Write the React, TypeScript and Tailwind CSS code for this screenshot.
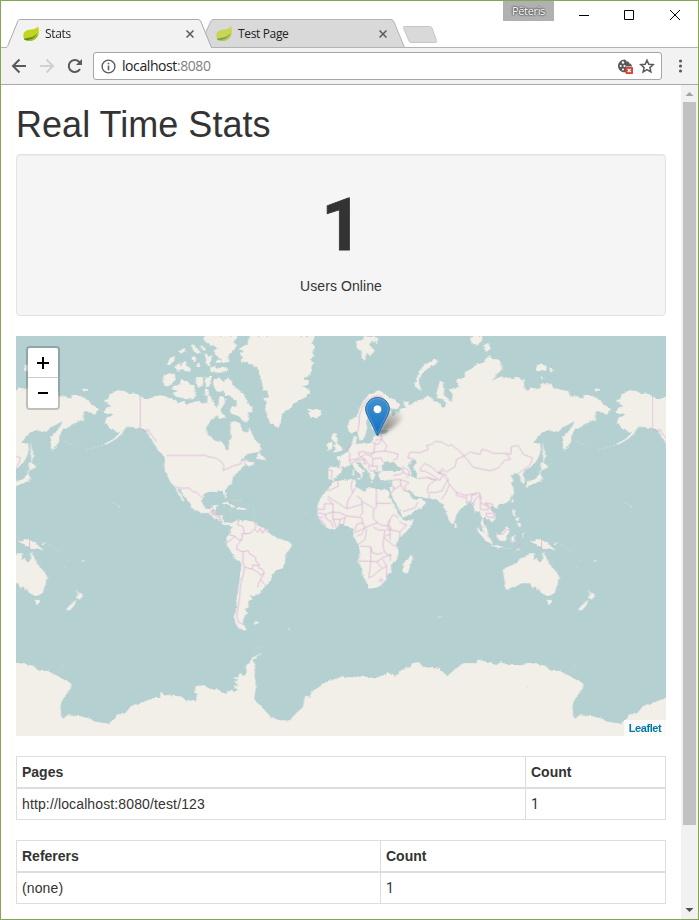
import type { ReactNode } from "react";

const LAND = "#f2efe9";
const WATER = "#b5d0d0";

/* Land outlines, grouped by the map region whose origin they are measured from (a third of a pixel per unit). */
const AMERICA =
  "M-59 180L-77 172 -97 170 -110 166 -125 160 -137 168 -151 176 -157 190 -168 193 -157 203 -149 210 -162 219 -172 226 -160 234 -146 232 -144 240 -160 244 -166 262 -156 268 -152 277 -142 278 -130 290 -120 288 -127 297 -142 310 -162 321 -182 331 -157 324 -132 309 -114 293 -104 277 -94 268 -98 277 -87 272 -76 275 -59 275 -46 283 -37 292 -30 303 -22 318 -14 330 -7 342 4 352 14 362 14 380 13 395 20 415 27 430 35 443 45 452 52 470 60 482 70 497 74 497 66 480 56 465 52 455 60 460 70 478 82 490 92 505 94 515 110 524 130 532 142 530 150 538 160 545 172 550 180 556 185 562 195 568 205 566 212 571 214 563 200 560 190 557 187 545 187 536 172 537 162 535 165 525 172 513 172 507 160 508 150 520 138 518 128 505 126 485 133 473 145 468 160 467 172 469 174 464 186 464 192 470 196 485 201 484 196 463 203 452 215 440 220 425 225 414 240 404 245 396 258 386 270 378 258 386 264 392 285 378 270 378 255 370 240 374 250 366 262 354 285 350 296 348 303 338 300 325 285 313 275 290 268 277 260 290 248 285 240 262 225 256 210 258 212 275 210 285 216 300 208 315 205 343 198 343 192 325 185 318 165 314 150 302 140 290 138 275 148 260 158 248 170 240 180 228 186 210 196 200 185 180 178 182 174 212 165 210 158 195 152 180 142 181 142 200 130 203 110 195 95 200 80 207 70 195 55 200 45 190 30 188 15 180 0 178 -12 180 -27 186 -42 190Z";
const ARCTIC =
  "M40 150L60 146 62 132 75 132 85 138 92 148 100 145 105 160 108 180 100 190 80 190 60 185 45 180 38 170 55 165 36 160ZM12 115L30 112 45 118 48 130 38 140 25 152 14 150 8 135ZM108 125L125 122 130 135 128 150 115 154 108 143ZM135 122L155 119 153 135 146 155 135 148ZM134 157L146 161 147 180 135 178ZM162 130L175 125 190 135 205 126 215 135 218 147 240 165 255 178 262 200 278 215 272 230 262 228 268 245 262 260 245 252 235 240 215 233 210 223 216 210 228 213 230 196 220 188 210 178 195 180 190 162 180 170 165 160 160 145ZM150 95L165 90 172 96 185 92 202 95 200 108 175 110 152 108ZM165 80L175 70 188 76 170 60 160 45 174 36 140 20 130 10 135 0 234 0 220 18 231 28 215 50 205 60 208 78 185 80ZM43 92L60 80 61 93 75 72 80 92 92 92 90 107 75 105 64 98 55 106ZM21 85L30 65 45 60 42 76 25 88ZM94 22L110 35 123 50 112 54 98 41ZM56 44L74 36 76 45 62 54ZM118 30L126 28 138 40 132 45ZM132 50L146 62 157 55 155 68 148 92 136 80 139 71ZM94 65L104 60 109 68 101 80ZM111 83L122 80 119 94 109 92ZM173 226L183 228 200 247 190 245 178 250 173 240ZM185 180L198 187 193 200 188 215 182 200Z";
const GREENLAND =
  "M270 0L262 24 235 40 252 44 240 55 250 66 240 72 242 80 260 78 275 85 290 95 300 115 306 140 310 165 322 162 325 185 312 186 320 200 314 215 322 240 330 262 345 270 355 277 361 262 365 240 370 228 385 222 402 203 420 192 440 182 450 172 448 160 425 150 436 150 450 135 430 128 452 115 455 90 462 80 450 70 462 60 456 48 464 35 457 20 465 0ZM440 220L450 226 443 231 455 245 470 246 484 236 482 224 470 218 458 222 448 218ZM292 358L300 345 302 358 315 362 316 374 305 370 288 369ZM262 382L275 385 284 378 281 387 268 391ZM184 502L200 498 215 505 228 514 220 515 205 506 188 503ZM228 516L245 514 262 520 248 522 240 520 232 521ZM208 520L217 521 212 523ZM-235 160L-216 159 -217 164 -228 165Z";
const SOUTH_AMERICA =
  "M642 73L652 66 662 57 668 66 668 58 680 62 700 65 713 63 722 74 732 80 750 85 760 100 775 110 800 119 819 125 827 133 824 145 812 158 808 168 807 188 800 205 780 211 768 223 764 240 750 257 740 268 735 273 730 283 712 289 700 289 710 298 697 303 698 322 688 327 693 340 685 350 681 362 680 370 692 389 684 392 668 385 658 370 653 350 660 330 663 290 671 240 676 190 670 182 655 175 645 155 635 138 629 130 632 120 631 110 643 100 646 85ZM715 367L728 365 725 371 718 371ZM813 381L823 388 818 389ZM628 70L635 67 645 71 643 77 634 72Z";
const ANTARCTICA =
  "M-2 488L25 491 50 497 70 512 95 513 120 525 140 537 160 545 167 555 160 575 148 585 140 600 134 612 134 640 142 657 152 646 190 648 215 654 235 664 278 672 298 655 302 643 325 643 345 618 375 608 410 595 432 592 434 577 445 584 475 587 500 590 513 607 515 600 540 604 542 585 536 575 540 558 565 556 580 566 605 568 628 583 640 570 660 573 667 569 652 560 666 555 655 545 668 540 650 533 665 530 672 520 685 530 692 515 690 495 700 490 705 478 715 470 738 457 730 465 712 480 717 500 716 530 720 560 714 600 735 618 765 652 790 661 822 661 840 640 860 622 868 587 880 590 890 573 910 560 935 543 965 535 975 528 1002 533 1037 527 1077 535 1117 518 1137 528 1157 510 1182 500 1190 490 1207 486 1222 500 1272 507 1294 528 1317 508 1342 490 1382 490 1385 478 1402 483 1442 495 1454 486 1472 494 1517 496 1538 488V780H-2Z";
const EURASIA =
  "M222 172L235 182 262 195 270 208 262 220 245 218 235 213 243 225 246 238 250 241 258 232 255 225 266 234 270 218 290 215 280 205 282 195 295 197 300 208 318 195 340 188 352 180 360 182 375 195 388 200 395 215 405 213 408 200 395 188 383 187 380 170 385 150 390 135 398 137 400 155 405 160 400 178 412 185 425 200 428 175 416 160 434 157 447 152 440 142 442 125 450 130 465 122 464 108 485 98 500 85 520 80 527 68 540 57 548 70 566 70 575 85 578 100 565 110 545 135 570 122 590 125 610 130 625 123 642 135 642 153 652 165 665 155 685 160 695 142 715 142 735 155 755 162 775 165 780 182 800 180 820 188 822 176 845 178 865 190 885 207 903 220 890 237 875 228 859 225 855 235 858 252 835 260 810 275 795 278 785 300 783 318 762 345 757 320 760 300 780 280 790 265 793 255 778 265 755 275 750 287 710 283 695 290 670 320 690 322 693 345 680 375 660 395 648 400 638 415 645 430 643 440 633 440 630 420 623 415 615 411 600 420 610 430 602 440 610 455 612 470 605 485 590 500 565 508 555 515 545 508 540 518 552 530 557 545 545 560 538 550 528 545 520 540 518 555 528 575 535 595 530 602 518 582 513 560 515 545 508 525 495 530 490 510 480 495 485 492 472 505 455 515 440 535 434 555 425 568 415 550 405 520 400 505 390 500 380 490 350 487 335 484 315 480 302 465 293 460 300 475 308 488 320 492 328 485 335 490 348 500 335 515 315 525 295 538 278 545 272 530 262 510 250 490 243 472 240 460 246 450 247 432 240 430 230 435 212 431 205 420 206 408 190 406 195 418 188 435 180 425 178 412 165 395 155 385 148 378 138 380 150 395 168 408 157 407 158 420 152 428 151 415 132 398 128 385 115 390 98 392 94 408 82 420 70 432 55 430 55 410 55 395 75 393 88 396 90 380 78 364 95 358 108 350 115 345 125 325 128 318 130 300 140 303 138 320 160 323 180 322 190 310 190 300 202 296 230 292 235 285 215 283 195 285 185 278 182 255 194 240 190 225 175 238 168 260 172 275 165 300 158 312 148 314 143 290 138 285 125 293 115 285 113 270 118 255 140 240 150 215 160 195 175 178 195 170 205 162Z";
const EURASIA_ISLES =
  "M385 70L383 80 350 100 335 115 325 135 335 165 322 157 313 150 319 130 325 110 345 85 370 72ZM138 15L158 12 162 0 180 3 195 0 205 10 200 22 185 14 180 28 195 45 180 60 170 50 165 75 155 65 155 45 143 40ZM72 290L82 295 77 302 84 310 80 320 96 335 95 345 68 350 78 341 72 328 80 324 70 315 62 305ZM55 320L68 318 66 340 50 342 56 335 50 330ZM480 5L492 3 507 22 502 30 486 24ZM482 0L515 0 518 16 505 22ZM518 30L535 20 542 38 528 48ZM680 88L692 84 710 90 709 105 695 102 678 109ZM717 97L735 103 722 108ZM694 120L703 128 694 130ZM854 161L870 158 869 163 858 165ZM695 395L692 415 698 432 685 438 675 443 660 445 650 457 647 450 655 435 675 430 688 415 690 402ZM695 375L715 392 702 400 692 402ZM697 318L704 345 708 360 700 378 699 350ZM435 558L442 572 436 575 432 568ZM609 488L611 495 607 502 604 496ZM554 512L566 511 560 518ZM130 400L133 404 132 420 127 417ZM178 437L192 440 182 441ZM236 439L243 436 239 442ZM138 426L151 426 148 432Z";
const AFRICA =
  "M65 440L75 436 100 432 130 430 138 435 135 452 150 458 165 467 175 453 200 459 235 462 240 475 236 475 248 500 262 522 269 540 283 555 300 552 311 549 305 567 285 592 265 612 262 627 266 642 264 667 250 680 242 687 245 707 232 717 228 732 210 750 198 755 175 758 170 742 158 717 155 697 143 674 150 652 145 627 138 614 130 597 132 582 125 574 115 572 90 565 80 578 60 580 45 572 28 550 22 535 25 500 35 480 50 465 60 450Z";
const OCEANIA =
  "M214 163L218 175 205 215 195 221 188 212 189 190 205 177ZM488 210L500 202 530 190 540 175 555 172 565 160 585 160 583 175 600 187 607 180 610 155 618 170 626 190 645 210 658 230 655 250 642 280 630 287 605 283 595 265 590 270 588 260 578 266 570 250 545 250 520 262 498 268 493 263 495 250ZM620 299L636 300 632 313 626 314ZM741 266L752 278 765 285 755 300 744 293 750 282ZM745 298L740 315 725 332 714 328 730 312ZM565 120L580 125 590 116 620 125 635 140 647 153 628 145 610 148 600 140 588 135 574 126ZM470 100L480 103 495 88 503 78 510 90 502 105 497 123 480 122 470 112ZM409 83L425 92 445 110 457 125 455 133 435 120 420 102ZM453 134L480 138 508 145 520 147 490 144 458 140ZM513 110L530 105 520 113 528 125 518 121 516 131 512 124ZM517 28L524 28 525 44 530 52 518 45ZM530 70L542 68 542 82 532 78ZM524 57L538 50 534 65ZM640 133L655 125 646 136ZM546 100L551 98 550 115ZM568 113L578 110 574 114ZM526 150L542 144 534 151ZM704 196L716 206 712 204ZM760 183L770 179 764 187ZM295 349L304 350 299 353ZM424 66L432 72 443 88 442 98 432 88Z";

const AMERICA_BORDERS =
  "M-59 180V275L-46 285 -36 280 -27 295 -10 318M20 358H138L143 362 168 366 185 378 192 390 189 403 205 397 220 389 242 384 247 370 254 372V384M45 452L65 457 88 456 100 469 108 467 125 485M150 525L162 521 155 540M162 535L172 545 185 535M180 556V548";
const SOUTH_BORDERS =
  "M668 60L665 74 681 80 686 102 704 99 713 88M713 65L720 78 716 88 725 98 733 85 740 100 748 84 753 98M640 105L655 108 668 120 678 118V101L686 102M629 130L645 120 655 108M678 118L664 135 661 147 678 155 697 152 701 162 718 171 721 186 729 192 728 204M678 155L682 160 680 185 686 202 708 207 710 195 728 196M686 202L682 223 675 250 669 305 662 350 668 367 680 374M708 207L728 218 733 226 745 219 738 207 728 204M745 219L737 233 728 248 725 262M733 240L750 257M582 40L593 28 590 42 607 45 618 67";
const EURASIA_BORDERS =
  "M206 178L190 182 168 194 158 212 148 238 147 265 143 288M192 182L212 180 220 184M126 323L110 340 120 354 118 373 122 385 137 374 165 370 148 360 145 350 158 346 178 352 192 350 194 322 186 318M118 373L150 366 165 354 182 360 193 348 224 345 231 330 216 310 196 312M194 322L205 325 216 310 212 296M224 345L250 350 264 354 261 368 250 372M182 360L189 368 213 366 218 378M165 370L178 388 175 395 183 405 201 402 203 390 187 390 189 368M165 370L160 382 171 383M178 388L189 392M55 402L66 403 65 430M85 396L100 394M276 390L297 405 298 417 280 410 278 395M281 405L272 415 250 418M247 432L270 430 273 447 253 460 248 450M270 430L297 440 285 450 285 462 299 469M273 447L280 462 295 468M298 417L288 425M240 470L248 467 253 452M278 527L300 520 315 515 324 498M325 428L352 424 376 432 356 447 352 465 359 478 355 488M352 424L365 430 390 432 398 418 416 430 405 445 396 465 374 470 359 468M332 395L344 382 363 392 383 410 395 415M332 395V405L345 405 368 418 385 430M400 405L385 410 410 417M312 370L293 365 300 348 330 350 355 340 350 328 368 324 375 316 395 318 415 330 424 326 448 345 463 360 440 370 435 392 409 408 398 397 385 410M463 360L480 348 510 355 515 340 535 345 550 352 588 352 602 370 585 372 565 396 540 404 490 394 463 360M588 352L602 355 604 332 625 328 640 355 668 366 660 388 650 395 625 412M410 430L418 445 408 470 395 490M418 445L438 468 465 478 485 474 508 470 515 490M438 468L440 478 468 485M470 480V502L485 492 484 478 500 475M488 510L495 490 508 478 512 500 530 510 525 500 550 505M512 500L510 520 535 522 532 505 548 525 552 545 530 542 528 532 545 532M518 570L525 575";
const AFRICA_BORDERS =
  "M54 465L85 450 83 435M25 520H43V503L69 503M52 488L69 503V528L45 535 24 530M52 480L110 518 113 495 128 470 123 450 128 430M110 518L155 505M128 470L137 455M140 480L155 490 158 530 150 540M199 457V502H243M199 502V515L190 520V548L203 560 215 568 240 570M158 498L190 515M105 545L110 540 155 545 158 560 140 565 135 585M110 540L90 530 69 528M69 528V550L90 550 105 545 100 568M45 535L50 550 62 555 70 575M69 550L80 575M90 550L88 568M24 543L42 545M30 553L42 560 48 572M158 560L165 575 190 565 203 560M165 575L135 590M240 570L243 582 232 582 240 550 250 535 265 545M240 550L232 565M268 555L275 562 290 567 270 587 268 610M243 582L270 587M190 573L205 582 225 582 222 605 252 630 265 625M222 605L218 625 224 650 242 660M150 630L182 632 187 650 205 655 218 650M143 674L200 677 218 665 242 655 240 675M182 632V675L180 700 176 725 190 720 205 705 230 690 218 670M200 677L215 695M230 690L230 725M140 600L155 595 165 575M145 625L165 610 170 580M208 732L214 727 219 733 212 738ZM240 575V612M225 600L240 595";
const OCEANIA_BORDERS =
  "M605 118V147M472 104L490 102 498 90 510 88M534 134L540 136M432 71L438 67M395 5L402 15";

function Coastlines() {
  return (
    <g>
      <g filter="url(#coast)" fill={LAND}>
        <g transform="translate(432 0)">
          <path d={AMERICA} />
          <path d={ARCTIC} />
          <path d={GREENLAND} />
        </g>
        <g transform="translate(0 492)">
          <path d={SOUTH_AMERICA} />
          <path d={ANTARCTICA} />
        </g>
        <g transform="translate(882 0)">
          <path d={EURASIA} />
          <path d={EURASIA_ISLES} />
          <path d={AFRICA} />
          <path
            fill={WATER}
            d="M215 390L222 377 235 376 240 382 250 376 262 390 276 400 270 405 245 404 218 405ZM295 385L305 373 318 373 320 380 309 392 322 410 320 426 306 425 304 410 297 395ZM203 406L212 406 210 411ZM190 282L230 283 225 290 198 294Z"
          />
        </g>
        <g transform="translate(972 492)">
          <path d={OCEANIA} />
        </g>
      </g>
      <g fill="none" stroke="#d6a5d0" strokeWidth="2.300" strokeOpacity="0.85" strokeLinejoin="round">
        <path transform="translate(432 0)" d={AMERICA_BORDERS} />
        <path transform="translate(0 492)" d={SOUTH_BORDERS} />
        <path transform="translate(882 0)" d={EURASIA_BORDERS} />
        <path transform="translate(882 0)" d={AFRICA_BORDERS} />
        <path transform="translate(972 492)" d={OCEANIA_BORDERS} />
      </g>
      {/* Small island chains */}
      <g fill="none" stroke={LAND} strokeWidth="2" strokeDasharray="4 7" strokeOpacity="0.85">
        <path d="M145 316L182 332M212 341L250 331M50 392L80 379M292 502L304 508" />
        <path d="M304 508L314 516" strokeDasharray="none" />
        <path d="M100 627L130 648M150 665L158 680M135 982L143 996M712 940L740 930M868 530L878 532M650 492L680 496M712 520L715 545" />
      </g>
    </g>
  );
}

function WorldMap() {
  return (
    <svg className="block h-[400px] w-[650px]" viewBox="0 0 1950 1200">
      <defs>
        <filter id="coast" filterUnits="userSpaceOnUse" x="-20" y="-20" width="2000" height="1300" colorInterpolationFilters="sRGB">
          <feTurbulence type="fractalNoise" baseFrequency="0.1" numOctaves="2" seed="4" />
          <feDisplacementMap in="SourceGraphic" scale="9" xChannelSelector="R" yChannelSelector="G" />
        </filter>
      </defs>
      <rect width="1950" height="1200" fill={WATER} />
      <g transform="translate(-1536 0)">
        <Coastlines />
      </g>
      <Coastlines />
      <g transform="translate(1536 0)">
        <Coastlines />
      </g>
    </svg>
  );
}

function Pin() {
  return (
    <svg className="absolute top-[60px] left-[349px] h-[42px] w-[46px]" viewBox="0 0 46 42">
      <defs>
        <linearGradient id="pin" x1="0" y1="0" x2="0" y2="1">
          <stop offset="0" stopColor="#4293ce" />
          <stop offset="1" stopColor="#126fc6" />
        </linearGradient>
        <linearGradient id="shade" x1="0" y1="1" x2="1" y2="0">
          <stop offset="0" stopColor="#000" stopOpacity="0.6" />
          <stop offset="1" stopColor="#000" stopOpacity="0.04" />
        </linearGradient>
        <filter id="soft" x="-30%" y="-30%" width="160%" height="160%">
          <feGaussianBlur stdDeviation="2" />
        </filter>
      </defs>
      <path d="M13 40L21 20C27 15 36 15 37 21C36 28 24 34 13 40Z" fill="url(#shade)" filter="url(#soft)" />
      <path
        d="M12.500 1.500C6 1.500 .6 6.500 .6 12.900C.6 17 3 20.500 5 24.500L12.500 40L20 24.500C22 20.500 24.400 17 24.400 12.900C24.400 6.500 19 1.500 12.500 1.500Z"
        fill="url(#pin)"
        stroke="#2d6e9e"
      />
      <path
        d="M12.500 2.600C6.800 2.600 1.800 7 1.800 12.900C1.800 17 4 20 6 24L12.500 37.600L19 24C21 20 23.200 17 23.200 12.900C23.200 7 18.200 2.600 12.500 2.600Z"
        fill="none"
        stroke="#fff"
        strokeOpacity="0.18"
      />
      <circle cx="12.500" cy="13.200" r="4.300" fill="#fff" stroke="#2f76ae" strokeWidth="0.7" />
    </svg>
  );
}

function Leaf({ faded }: { faded?: boolean }) {
  return (
    <svg className="h-4 w-4 shrink-0" viewBox="0 0 16 16" opacity={faded ? 0.72 : 1}>
      <path d="M15 .3C16.800 5 16 10.500 12 13.300C9 15.500 4.500 15.800 1.300 13.600C-.4 10-.2 6 3.500 4.400C7.200 2.900 12.500 4.300 15 .3Z" fill="#c4d420" />
      <path d="M15.500 7C13.500 10.500 8.500 12 2 12.200L1.300 13.700C4.500 15.700 9 15.500 12 13.300C14.200 11.700 15.200 9.500 15.500 7Z" fill="#aac018" />
      <path d="M14.200 6.800C11.800 10.800 7.500 12 1.500 12.400L1.400 13.900C7 14.700 12 12.500 14.200 6.800Z" fill="#558f2c" />
    </svg>
  );
}

function Close() {
  return (
    <svg className="h-2 w-2" viewBox="0 0 8 8">
      <path d="M.5 .5L7.500 7.500M7.500 .5L.5 7.500" stroke="#5a5a5a" strokeWidth="1.500" />
    </svg>
  );
}

function Tab({ title, active }: { title: string; active?: boolean }) {
  return (
    <div className={active ? "relative z-10 h-[29px] w-[206px]" : "relative -ml-[13px] h-[29px] w-[206px]"}>
      <svg className="absolute inset-0" width="206" height="29" viewBox="0 0 206 29">
        {active ? (
          <path d="M0 28.500C2 28.500 1.500 27 2.500 25L11.500 3C12.500 .8 12.800 .5 14 .5H192C193.500 .5 194 1 195 3L205.500 28.500V29H0Z" fill="#f2f2f2" stroke="#a9a9a9" />
        ) : (
          <path d="M6 15L11.500 3C12.500 .8 12.800 .5 14 .5H192C193.500 .5 194 1 195 3L205.500 28.500H12Z" fill="#d9d9d9" stroke="#b3b3b3" />
        )}
        {active && <path d="M1 28.500H205" stroke="#f2f2f2" strokeWidth="1.500" />}
      </svg>
      <div className="relative flex h-full items-center pr-[18px] pl-[17px]">
        <Leaf faded={!active} />
        <span className="ml-[6px] flex-1 font-['Open_Sans',sans-serif] text-[12px] leading-4 tracking-[-0.35px] text-[#222]">{title}</span>
        <Close />
      </div>
    </div>
  );
}

function TitleBar() {
  return (
    <div className="relative flex h-[47px] items-end border-b border-[#b3b3b3] bg-white pl-[5px]">
      <div className="-mb-px flex">
        <Tab title="Stats" active />
        <Tab title="Test Page" />
      </div>
      <svg className="mb-[3px] -ml-[3px]" width="36" height="18" viewBox="0 0 36 18">
        <path d="M2.500 .5H27.500C29 .5 29.500 1 30 2L34.500 14.500C35 16 34.500 16.500 33 16.500H9.500C8 16.500 7.500 16 7 15L1.500 2C1 1 1.500 .5 2.500 .5Z" fill="#d9d9d9" stroke="#c6c6c6" />
      </svg>
      <div className="absolute top-0 -right-px flex items-start">
        <div className="mr-[24px] flex h-5 w-[51px] items-center justify-center bg-[#b1b1b1] font-['Open_Sans',sans-serif] text-[11px] tracking-[-0.35px] text-white [text-shadow:0_0_2px_#333,0_0_2px_#333]">
          Pēteris
        </div>
        <svg width="121" height="28" viewBox="0 0 121 28" fill="none" stroke="#000">
          <path d="M1 14.500H11M46.500 9.500H55.500V18.500H46.500ZM92 9L102 19M102 9L92 19" />
        </svg>
      </div>
    </div>
  );
}

function Toolbar() {
  return (
    <div className="flex h-[37px] items-center border-b border-[#a9a9a9] bg-[#f2f2f2] pl-[10px]">
      <svg width="74" height="16" viewBox="0 0 74 16" fill="none" stroke="#5a5a5a" strokeWidth="2">
        <path d="M15 8H2M8.500 1.500L2 8L8.500 14.500" />
        <path d="M29 8H42M35.500 1.500L42 8L35.500 14.500" stroke="#d0d0d0" />
        <path d="M69 11A6 6 0 1 1 68 3.700L69.500 5.500" />
        <path d="M71 1V7H65Z" fill="#5a5a5a" stroke="none" />
      </svg>
      <div className="ml-2 flex h-7 w-[569px] items-center rounded-[3px] border border-[#a6a6a6] bg-white pl-[7px]">
        <svg width="15" height="15" viewBox="0 0 15 15" fill="none" stroke="#5a5a5a">
          <circle cx="7.500" cy="7.500" r="6.400" strokeWidth="1.400" />
          <path d="M7.500 6.500V11.300M7.500 3.700V5.200" strokeWidth="1.600" />
        </svg>
        <span className="ml-[6px] flex-1 font-['Open_Sans',sans-serif] text-[14px] leading-5 tracking-[-0.42px] text-[#222]">
          localhost<span className="text-[#808080]">:8080</span>
        </span>
        <svg className="mr-[6px]" width="38" height="17" viewBox="0 0 38 17">
          <path d="M7.500 1.500C4 1.500 1 4.500 1 8C1 11.500 4 14.300 7.500 14.300H9V8.500H15C15 7 14 5.500 12.500 5.500C12 3.500 10.500 3.500 9.500 3.500C9.500 2.500 8.500 1.500 7.500 1.500Z" fill="#5a5a5a" />
          <circle cx="6" cy="4.500" r="1.200" fill="#fff" />
          <circle cx="3.700" cy="8" r="1" fill="#fff" />
          <circle cx="7.500" cy="8" r="1.100" fill="#fff" />
          <circle cx="6" cy="11.500" r="1" fill="#fff" />
          <rect x="8.500" y="9" width="7.500" height="7" rx=".7" fill="#db4437" />
          <path d="M10.700 11L13.800 14M13.800 11L10.700 14" stroke="#fff" strokeWidth="1.200" />
          <path d="M30 2.200L31.800 6.300L36.200 6.700L32.900 9.600L33.900 14L30 11.700L26.100 14L27.100 9.600L23.800 6.700L28.200 6.300Z" fill="none" stroke="#5a5a5a" strokeWidth="1.500" />
        </svg>
      </div>
      <svg className="ml-[16px]" width="5" height="14" viewBox="0 0 5 14" fill="#5a5a5a">
        <circle cx="2.500" cy="2" r="1.550" />
        <circle cx="2.500" cy="7" r="1.550" />
        <circle cx="2.500" cy="12" r="1.550" />
      </svg>
    </div>
  );
}

function StatsTable({ heading, value, split }: { heading: string; value: string; split: string }) {
  const cell = (child: ReactNode, first: boolean) => (
    <div className={`${first ? split : "flex-1 border-r"} h-[30px] border-l border-[#ddd] px-[5px] pt-[5px]`}>{child}</div>
  );
  return (
    <div className="mb-5 h-16 w-[650px] border-y border-[#ddd]">
      <div className="flex border-b-2 border-[#ddd] font-bold">
        {cell(heading, true)}
        {cell("Count", false)}
      </div>
      <div className="flex tracking-[0.13px]">
        {cell(value, true)}
        {cell(<span className="font-['Roboto',sans-serif]">1</span>, false)}
      </div>
    </div>
  );
}

export default function App() {
  return (
    <div className="flex h-[920px] w-[699px] flex-col overflow-hidden border border-[#84a756] bg-white">
      <TitleBar />
      <Toolbar />
      <div className="flex min-h-0 flex-1">
        <main className="flex-1 overflow-hidden pl-[15px] font-['Liberation_Sans',Arial,sans-serif] text-[14px] leading-5 text-[#333]">
          <h1 className="mt-5 mb-[9px] text-[36px] leading-10 tracking-[0.03px]">Real Time Stats</h1>
          <section className="mb-5 flex h-[162px] w-[650px] flex-col items-center rounded-[4px] border border-[#e3e3e3] bg-[#f5f5f5] shadow-[inset_0_1px_1px_rgba(0,0,0,0.05)]">
            <div className="mt-[19px] h-[102px] pl-[2px] font-['Roboto',sans-serif] text-[72px] leading-[103px] font-bold [-webkit-text-stroke:0.8px_#333]">1</div>
            <div className="tracking-[0.08px]">Users Online</div>
          </section>
          <section className="relative mb-5 h-[400px] w-[650px] overflow-hidden">
            <WorldMap />
            <Pin />
            <div className="absolute top-[10px] left-[10px] w-[34px] rounded-[4px] border-2 border-black/20 bg-clip-padding">
              <div className="flex h-[30px] items-center justify-center rounded-t-[2px] border-b border-[#ccc] bg-white">
                <svg className="mt-px" width="14" height="14" viewBox="0 0 14 14">
                  <path d="M1 7H13M7 1V13" stroke="#000" strokeWidth="2" />
                </svg>
              </div>
              <div className="flex h-[30px] items-center justify-center rounded-b-[2px] bg-white">
                <svg width="14" height="14" viewBox="0 0 14 14">
                  <path d="M2 7H12" stroke="#000" strokeWidth="2" />
                </svg>
              </div>
            </div>
            <div className="absolute right-0 bottom-0 flex h-4 w-[42px] justify-center bg-white/70 text-[11px] leading-4 font-bold tracking-[-0.45px] text-[#0078a8]">
              Leaflet
            </div>
          </section>
          <StatsTable heading="Pages" value="http://localhost:8080/test/123" split="w-[509px]" />
          <StatsTable heading="Referers" value="(none)" split="w-[364px]" />
        </main>
        <aside className="flex w-[17px] flex-col items-center bg-[#f1f1f1]">
          <svg width="17" height="17" viewBox="0 0 17 17">
            <path d="M4.500 11L8.500 7L12.500 11Z" fill="#a3a3a3" />
          </svg>
          <div className="h-[723px] w-[13px] bg-[#c1c1c1]" />
          <div className="flex-1" />
          <svg width="17" height="17" viewBox="0 0 17 17">
            <path d="M4.500 6L8.500 10L12.500 6Z" fill="#505050" />
          </svg>
        </aside>
      </div>
    </div>
  );
}
